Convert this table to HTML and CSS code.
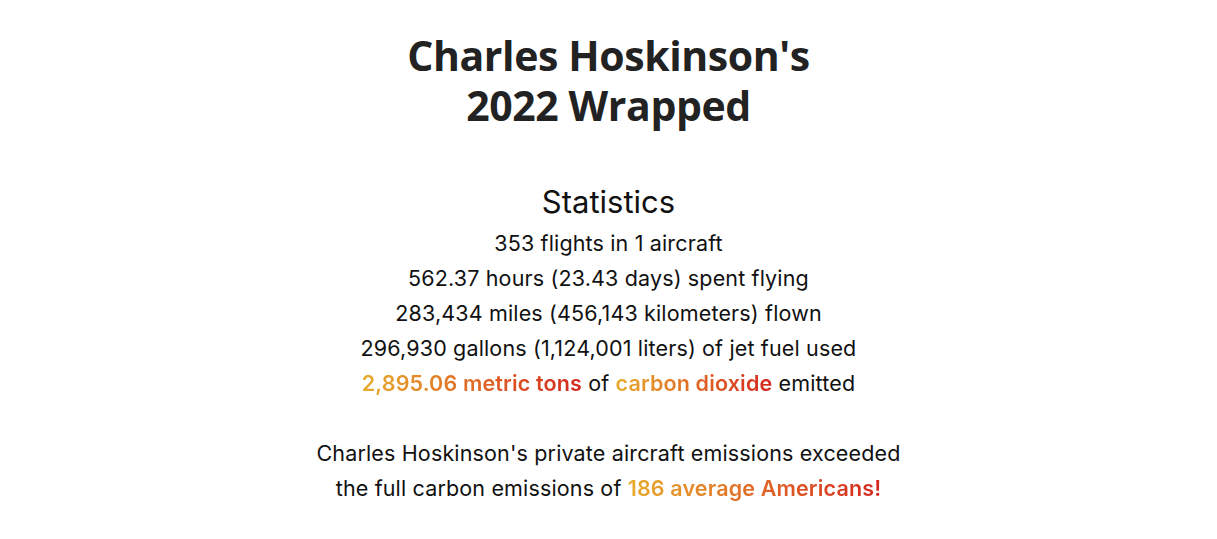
FILE: index.html
```html
<!DOCTYPE html>
<html>
<head>
<meta charset="utf-8">
<link rel="stylesheet" href="styles.css">
</head>
<body>
<main class="page">
  <h1 class="title">Charles Hoskinson's<br>2022 Wrapped</h1>
  <section class="stats">
    <h2 class="stats-heading">Statistics</h2>
    <p class="line">353 flights in 1 aircraft</p>
    <p class="line">562.37 hours (23.43 days) spent flying</p>
    <p class="line">283,434 miles (456,143 kilometers) flown</p>
    <p class="line">296,930 gallons (1,124,001 liters) of jet fuel used</p>
    <p class="line"><span class="hot">2,895.06 metric tons</span> of <span class="hot">carbon dioxide</span> emitted</p>
  </section>
  <p class="summary">Charles Hoskinson's private aircraft emissions exceeded<br>the full carbon emissions of <span class="hot">186 average Americans!</span></p>
</main>
</body>
</html>
```
FILE: styles.css
```css
html, body {
  margin: 0;
  padding: 0;
  background: #ffffff;
}
.page {
  display: flex;
  flex-direction: column;
  align-items: center;
  text-align: center;
  color: #111111;
  font-family: "Inter", "Lato", sans-serif;
  padding-top: 30px;
}
.title {
  margin: 0;
  font-family: "Open Sans", sans-serif;
  font-weight: 700;
  font-size: 41px;
  line-height: 50px;
  color: #222222;
  letter-spacing: -0.4px;
}
.stats {
  margin-top: 53px;
  display: flex;
  flex-direction: column;
  align-items: center;
}
.stats-heading {
  margin: 0 0 5px;
  font-weight: 400;
  font-size: 31px;
  line-height: 38px;
}
.line {
  margin: 0;
  font-size: 21.5px;
  line-height: 35px;
  letter-spacing: 0.15px;
}
.summary {
  margin: 35px 0 0;
  font-size: 21.5px;
  line-height: 35px;
  letter-spacing: 0.15px;
}
.hot {
  font-weight: 600;
  background: linear-gradient(90deg, #e8ac2c 0%, #e06a26 50%, #d3261e 100%);
  -webkit-background-clip: text;
  background-clip: text;
  color: transparent;
}
```
